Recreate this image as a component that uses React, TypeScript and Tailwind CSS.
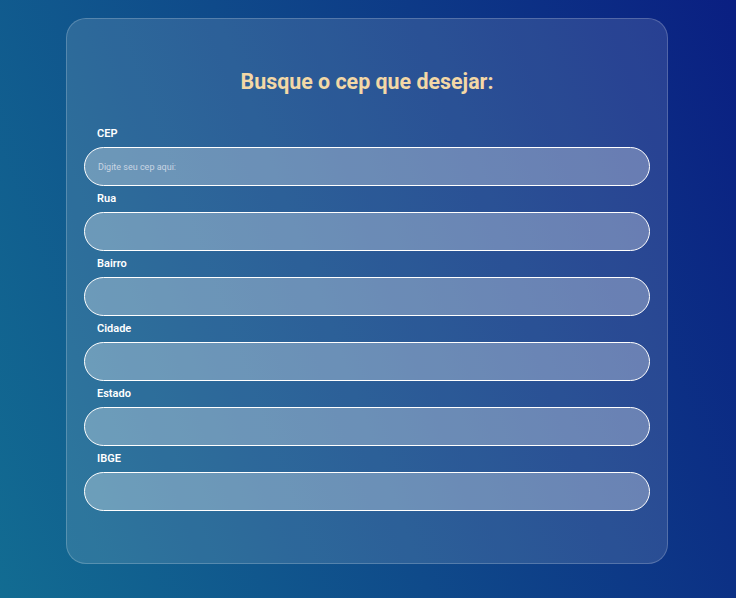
import React from "react";

const fields = ["CEP", "Rua", "Bairro", "Cidade", "Estado", "IBGE"];

export default function App() {
  return (
    <div
      className="w-full h-[598px] overflow-hidden pt-[18px] bg-[linear-gradient(70deg,#126c92_0%,#0f4a8a_45%,#0a1f82_100%)]"
      style={{ fontFamily: "Roboto, 'Liberation Sans', sans-serif" }}
    >
      <div className="ml-[66px] w-[602px] h-[546px] rounded-[20px] border border-white/20 bg-white/[0.12] px-[17px] pt-[49px] pb-[53px]">
        <h1 className="text-center text-[21.4px] leading-[28px] font-bold text-[#f3d8a6]">
          Busque o cep que desejar:
        </h1>
        <div className="mt-[31px] flex flex-col gap-[6px]">
          {fields.map((f, i) => (
            <div key={f} className="flex flex-col">
              <label className="pl-[13px] text-[11px] leading-[14px] font-semibold text-white mb-[6px]">
                {f}
              </label>
              <input
                className="h-[39px] w-full rounded-full border border-white bg-white/30 px-[13px] text-[9px] text-white outline-none placeholder:text-[#c9d5e3]"
                placeholder={i === 0 ? "Digite seu cep aqui:" : ""}
              />
            </div>
          ))}
        </div>
      </div>
    </div>
  );
}
